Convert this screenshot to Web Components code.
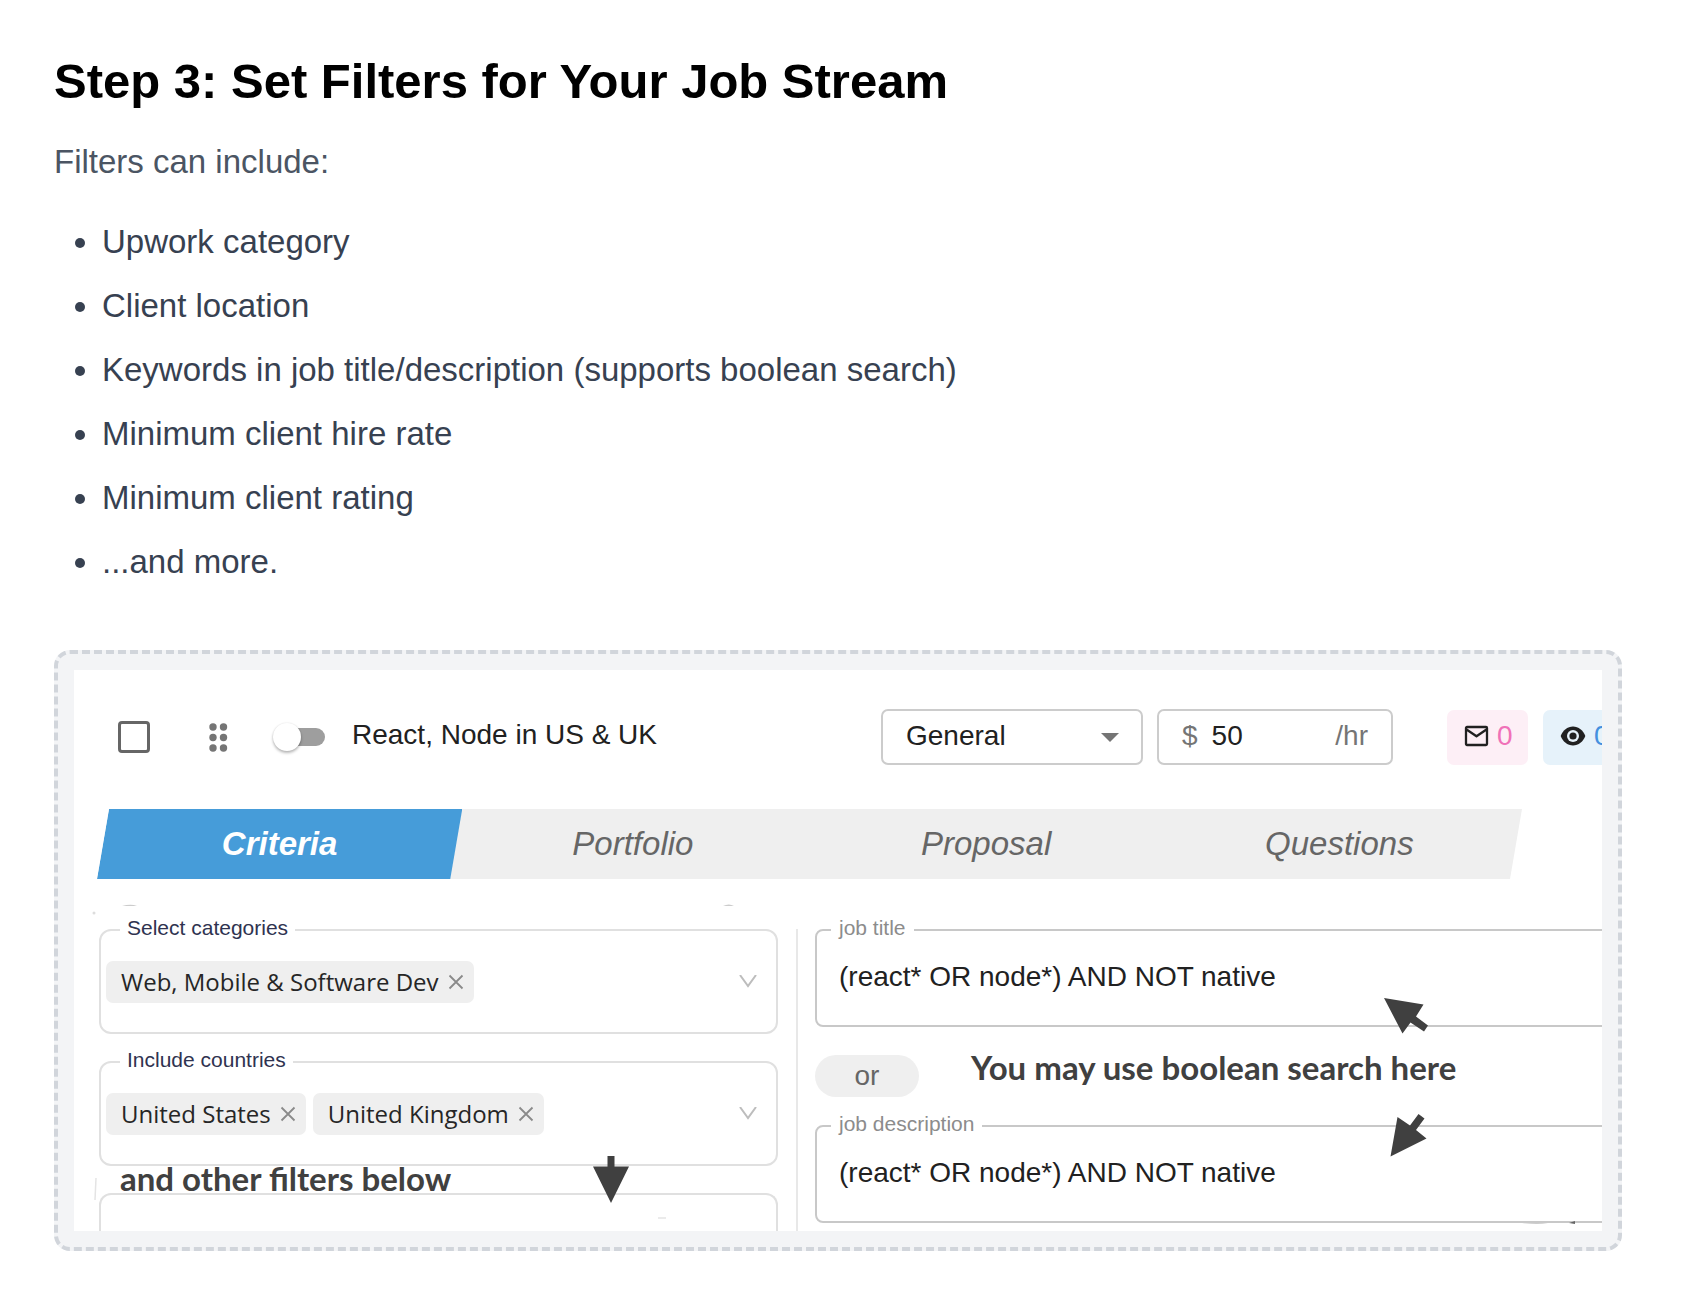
<!DOCTYPE html>
<html lang="en">
<head>
<meta charset="utf-8">
<title>Step 3: Set Filters for Your Job Stream</title>
<style>
body { margin: 0; background: #fff; font-family: "Liberation Sans", Arial, sans-serif; color: #212121; }
</style>
</head>
<body>
<guide-step>
  <span slot="title">Step 3: Set Filters for Your Job Stream</span>
  <span slot="intro">Filters can include:</span>
  <filter-list items="Upwork category|Client location|Keywords in job title/description (supports boolean search)|Minimum client hire rate|Minimum client rating|...and more."></filter-list>
  <dashed-frame>
    <stream-header name="React, Node in US &amp; UK"></stream-header>
    <stream-tabs items="Criteria|Portfolio|Proposal|Questions"></stream-tabs>
    <criteria-panel></criteria-panel>
  </dashed-frame>
</guide-step>

<script>
function define(name, render) {
  customElements.define(name, class extends HTMLElement {
    connectedCallback() {
      if (this.shadowRoot) return;
      this.attachShadow({ mode: 'open' }).innerHTML =
        '<style>*{box-sizing:border-box}button,input,select{font:inherit;color:inherit;margin:0}:host{display:block}</style>' + render(this);
    }
  });
}
const esc = s => s.replace(/&/g, '&amp;');

define('guide-step', () => `
<style>
:host { padding: 53px 62px 59px 54px; }
h2 { margin: 0 0 29px; font-size: 49px; line-height: 56px; font-weight: 700; color: #000; }
p { margin: 0 0 32px; font-size: 33px; line-height: 48px; color: #4b5563; }
</style>
<h2><slot name="title"></slot></h2>
<p><slot name="intro"></slot></p>
<slot></slot>`);

define('filter-list', el => `
<style>
ul { margin: 0 0 64px; padding: 0 0 0 48px; display: flex; flex-direction: column; gap: 16px; font-size: 33px; line-height: 48px; color: #374151; }
</style>
<ul>${el.getAttribute('items').split('|').map(t => `<li>${t}</li>`).join('')}</ul>`);

define('dashed-frame', () => `
<style>
:host { border: 4px dashed #d1d5db; border-radius: 16px; background: #f3f4f6; padding: 16px; }
.shot { background: #fff; overflow: hidden; position: relative; }
</style>
<div class="shot"><slot></slot></div>`);

define('stream-header', el => `
<style>
.row { display: flex; align-items: center; padding: 39px 0 44px 44px; font-size: 28px; line-height: 32px; }
.tick { appearance: none; width: 32px; height: 32px; border: 3px solid #666; border-radius: 4px; flex: none; }
.grip { margin: 0 45px 0 59px; flex: none; border: 0; padding: 0; background: none; display: flex; }
.toggle { appearance: none; flex: none; width: 52px; height: 28px; margin-right: 27px; display: flex; align-items: center; position: relative; }
.toggle::before { content: ""; width: 46px; height: 18px; margin-left: 6px; border-radius: 9px; background: #9e9e9e; }
.toggle::after { content: ""; position: absolute; left: 0; top: 0; width: 28px; height: 28px; border-radius: 50%; background: #fff; box-shadow: 0 2px 3px rgba(0,0,0,.28), 0 0 2px rgba(0,0,0,.1); }
.name { flex: 1; white-space: nowrap; padding-bottom: 4px; }
.box { border: 2px solid #ccc; border-radius: 7px; height: 56px; background: #fff; flex: none; display: flex; align-items: center; }
.profile { width: 262px; position: relative; margin-right: 14px; }
.profile select { appearance: none; border: 0; background: none; width: 100%; height: 100%; padding: 0 0 2px 23px; outline: 0; }
.profile svg { position: absolute; right: 22px; top: 22px; pointer-events: none; }
.rate { width: 236px; margin-right: 54px; padding: 0 23px 2px; color: #757575; }
.rate input { border: 0; background: none; flex: 1; min-width: 0; padding: 0 0 0 14px; color: #212121; outline: 0; }
.badge { flex: none; width: 81px; height: 55px; border-radius: 7px; display: flex; align-items: center; gap: 8px; padding: 0 0 2px 17px; margin-right: 15px; }
.badge svg { flex: none; }
.mail { background: #fdeff6; color: #f071b8; }
.seen { background: #e6f2fa; color: #4490df; margin-right: -22px; }
</style>
<div class="row">
  <input class="tick" type="checkbox" aria-label="Select stream">
  <button class="grip" aria-label="Reorder"><svg width="19" height="29" fill="#757575"><circle cx="4" cy="4" r="3.7"/><circle cx="14.500" cy="4" r="3.7"/><circle cx="4" cy="14.500" r="3.7"/><circle cx="14.500" cy="14.500" r="3.7"/><circle cx="4" cy="25" r="3.7"/><circle cx="14.500" cy="25" r="3.7"/></svg></button>
  <input class="toggle" id="on" type="checkbox">
  <label class="name" for="on">${esc(el.getAttribute('name'))}</label>
  <div class="box profile"><select aria-label="Profile"><option>General</option></select><svg width="18" height="9"><path d="M0 0h18l-9 9z" fill="#757575"/></svg></div>
  <div class="box rate"><span>$</span><input aria-label="Hourly rate" value="50"><span>/hr</span></div>
  <div class="badge mail"><svg width="25" height="22" viewBox="0 0 25 22" fill="none" stroke="#212121" stroke-width="2.300" stroke-linejoin="round"><rect x="2" y="2" width="21" height="18" rx="1"/><path d="M2.500 4.500l10 6.800 10-6.800"/></svg><span>0</span></div>
  <div class="badge seen"><svg width="26" height="22" viewBox="0 0 26 22"><path d="M13 1.500C7.500 1.500 2.700 5.500 0.700 11c2 5.500 6.800 9.500 12.300 9.500s10.300-4 12.300-9.500C23.300 5.500 18.500 1.500 13 1.500z" fill="#212121"/><circle cx="13" cy="11" r="6" fill="#e6f2fa"/><circle cx="13" cy="11" r="3.600" fill="#212121"/></svg><span>0</span></div>
</div>`);

define('stream-tabs', el => `
<style>
:host { padding: 0 80px 0 23px; }
nav { display: flex; height: 70px; background: #efefef; clip-path: polygon(12px 0, 100% 0, calc(100% - 12px) 100%, 0 100%); }
button { flex: 1; margin-right: -12px; border: 0; padding: 0; background: none; font-size: 33px; font-style: italic; color: #666; }
button:last-child { margin-right: 0; }
button.on { background: #469cd9; color: #fff; font-weight: 700; clip-path: polygon(12px 0, 100% 0, calc(100% - 12px) 100%, 0 100%); }
</style>
<nav>${el.getAttribute('items').split('|').map((t, i) => `<button${i ? '' : ' class="on"'}>${t}</button>`).join('')}</nav>`);

/* Outlined multi-select with removable chips */
define('chip-select', el => `
<style>
fieldset { margin: 0; min-width: 0; border: 2px solid #e0e0e0; border-radius: 12px; padding: 19px 19px 29px 5px; display: block; }
legend { margin-left: 14px; padding: 0 7px 4px; font-size: 21px; line-height: 20px; color: #2f3350; }
.row { display: flex; align-items: center; gap: 7px; }
.chip { display: flex; align-items: center; gap: 8px; height: 42px; padding: 0 9px 0 15px; border-radius: 7px; background: #efefef; font: 24px/32px "Open Sans", "Noto Sans", sans-serif; color: #262626; white-space: nowrap; }
button { border: 0; background: none; padding: 0; display: flex; }
.open { margin-left: auto; }
</style>
<fieldset><legend>${el.getAttribute('label')}</legend><div class="row">
${el.getAttribute('chips').split('|').map(t => `<span class="chip">${esc(t)}<button aria-label="Remove"><svg width="18" height="18" stroke="#8a8a8a" stroke-width="1.800"><path d="M2.500 2.500l13 13M15.500 2.500l-13 13"/></svg></button></span>`).join('')}
<button class="open" aria-label="Open"><svg width="18" height="14" fill="none" stroke="#bdbdbd" stroke-width="2"><path d="M1 0l8 11 8-11"/></svg></button>
</div></fieldset>`);

/* Outlined text box */
define('text-field', el => `
<style>
fieldset { margin: 0; min-width: 0; border: 2px solid #c8c8c8; border-radius: 8px; padding: 19px 20px 32px 22px; }
legend { margin-left: -8px; padding: 0 8px 4px; font-size: 21px; line-height: 20px; color: #8c8c8c; }
input { display: block; width: 100%; height: 32px; border: 0; padding: 0; background: none; outline: 0; font-size: 28px; color: #212121; }
</style>
<fieldset><legend><label for="v">${el.getAttribute('label')}</label></legend><input id="v" value="${el.getAttribute('value')}"></fieldset>`);

define('criteria-panel', () => `
<style>
:host { position: relative; padding: 39px 0 0 25px; }
.grid { display: grid; grid-template-columns: minmax(0, 679fr) minmax(0, 806fr); column-gap: 18px; }
.left { display: flex; flex-direction: column; }
.left chip-select + chip-select { margin-top: 16px; }
.right { padding: 0 0 8px 19px; background: linear-gradient(#e8e8e8, #e8e8e8) no-repeat 0 11px / 2px 100%; }
.right text-field { margin-right: -20px; }
.note { font: 700 33px/24px Lato, "Noto Sans", sans-serif; color: #404040; white-space: nowrap; }
.below { padding-left: 21px; height: 27px; position: relative; }
.next { flex: 1; border: 2px solid #e0e0e0; border-bottom: 0; border-radius: 12px 12px 0 0; }
.or { display: flex; align-items: flex-start; gap: 52px; margin: 28px 0 17px; }
.pill { flex: none; width: 104px; height: 42px; border-radius: 21px; background: #efefef; color: #666; font-size: 28px; line-height: 42px; text-align: center; }
.marks { position: absolute; left: 0; top: 0; pointer-events: none; }
</style>
<div class="grid">
  <div class="left">
    <chip-select label="Select categories" chips="Web, Mobile &amp; Software Dev"></chip-select>
    <chip-select label="Include countries" chips="United States|United Kingdom"></chip-select>
    <div class="note below">and other filters below</div>
    <div class="next"></div>
  </div>
  <div class="right">
    <text-field label="job title" value="(react* OR node*) AND NOT native"></text-field>
    <div class="or"><span class="pill">or</span><span class="note">You may use boolean search here</span></div>
    <text-field label="job description" value="(react* OR node*) AND NOT native"></text-field>
  </div>
</div>
<svg class="marks" width="1528" height="352" viewBox="74 879 1528 352" fill="#404040">
  <path d="M607.500 1156h7v10.500h14.500L611 1203l-18-36.500h14.500z"/>
  <path d="M1384 998l39.500 6.500-7.500 12 12 9-4 6-13.500-9-8 11z"/>
  <path d="M1390.500 1156.500l7-39.500 12.500 8.500 8.500-11.500 6 4.500-8.500 11.500 10.500 8.500z"/>
  <g fill="#ccc"><path d="M122 906q9-2.500 15 0zM723 906q6-3 11 0z"/><path d="M1522 1223h26q-10 2-26 0z"/></g>
  <circle cx="94" cy="913" r="1.500" fill="#ddd"/>
  <path d="M96 1178l-1 22" stroke="#e4e4e4" stroke-width="1.500"/>
  <path d="M658 1218h8" stroke="#e4e4e4" stroke-width="1.500"/>
  <path d="M1569 1223l6-2v3z" fill="#666"/>
</svg>`);
</script>
</body>
</html>
